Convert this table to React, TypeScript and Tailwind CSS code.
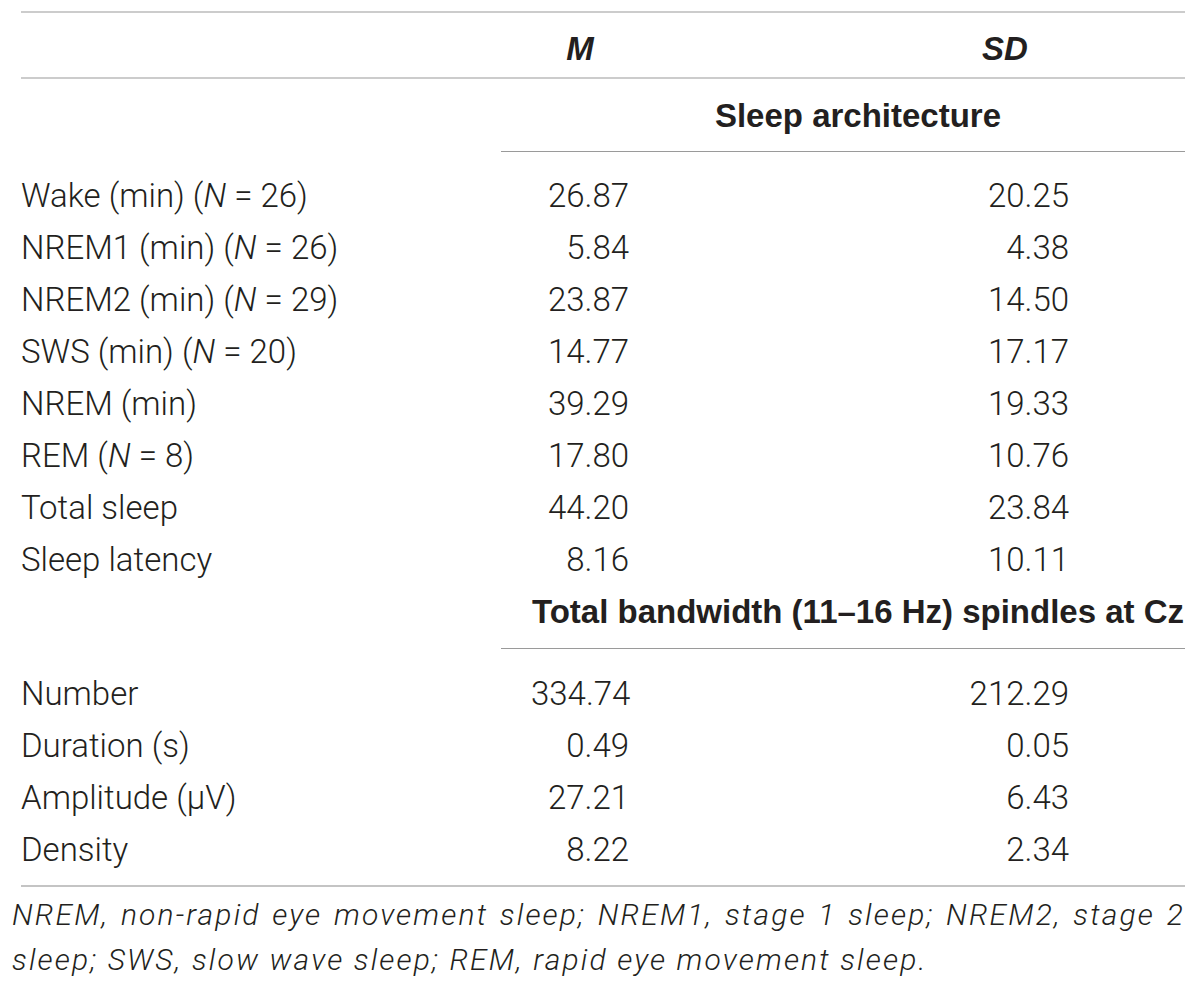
import React from 'react';

type Row = { label: React.ReactNode; m: string; sd: string };

const cols = 'grid grid-cols-[510px_98px_312px_128px_116px] items-center';

const N = <i>N</i>;

const architecture: Row[] = [
  { label: <>Wake (min) ({N} = 26)</>, m: '26.87', sd: '20.25' },
  { label: <>NREM1 (min) ({N} = 26)</>, m: '5.84', sd: '4.38' },
  { label: <>NREM2 (min) ({N} = 29)</>, m: '23.87', sd: '14.50' },
  { label: <>SWS (min) ({N} = 20)</>, m: '14.77', sd: '17.17' },
  { label: 'NREM (min)', m: '39.29', sd: '19.33' },
  { label: <>REM ({N} = 8)</>, m: '17.80', sd: '10.76' },
  { label: 'Total sleep', m: '44.20', sd: '23.84' },
  { label: 'Sleep latency', m: '8.16', sd: '10.11' },
];

const spindles: Row[] = [
  { label: 'Number', m: '334.74', sd: '212.29' },
  { label: 'Duration (s)', m: '0.49', sd: '0.05' },
  { label: 'Amplitude (μV)', m: '27.21', sd: '6.43' },
  { label: 'Density', m: '8.22', sd: '2.34' },
];

function DataRow({ row }: { row: Row }) {
  return (
    <div className={`${cols} h-[52px]`}>
      <div>{row.label}</div>
      <div className="text-right">{row.m}</div>
      <div />
      <div className="text-right">{row.sd}</div>
      <div />
    </div>
  );
}

function SectionTitle({ children }: { children: React.ReactNode }) {
  return (
    <div className={`${cols} h-[52px]`}>
      <div className="col-start-2 col-span-4 text-center font-['Liberation_Sans',sans-serif] font-bold whitespace-nowrap">
        {children}
      </div>
    </div>
  );
}

export default function App() {
  return (
    <div className="w-[1200px] h-[988px] bg-white text-[#231f20] font-['Roboto',sans-serif] font-light text-[33px] leading-none">
      <div className="pt-[11px] ml-[21px] w-[1164px]">
        <div className="h-[2px] bg-[#cccccc]" />
        <div className={`${cols} h-[64px] pt-[6px] font-['Liberation_Sans',sans-serif] font-bold italic`}>
          <div />
          <div className="text-center">M</div>
          <div />
          <div className="text-center">SD</div>
          <div />
        </div>
        <div className="h-[2px] bg-[#cccccc]" />

        <div className="pt-[10px] pb-[10px]">
          <SectionTitle>Sleep architecture</SectionTitle>
        </div>
        <div className="ml-[480px] h-px bg-[#9a9a9a]" />

        <div className="pt-[17px] pb-[11px]">
          {architecture.map((r, i) => (
            <DataRow key={i} row={r} />
          ))}
          <SectionTitle>Total bandwidth (11–16 Hz) spindles at Cz</SectionTitle>
        </div>
        <div className="ml-[480px] h-px bg-[#9a9a9a]" />

        <div className="pt-[18px] pb-[10px]">
          {spindles.map((r, i) => (
            <DataRow key={i} row={r} />
          ))}
        </div>
        <div className="h-[2px] bg-[#c4c4c4]" />
      </div>

      <div className="ml-[12px] w-[1173px] pt-[5px] italic text-[30px] leading-[45px] tracking-[0.072em]">
        <div className="text-justify [text-align-last:justify]">
          NREM, non-rapid eye movement sleep; NREM1, stage 1 sleep; NREM2, stage 2
        </div>
        <div>sleep; SWS, slow wave sleep; REM, rapid eye movement sleep.</div>
      </div>
    </div>
  );
}
